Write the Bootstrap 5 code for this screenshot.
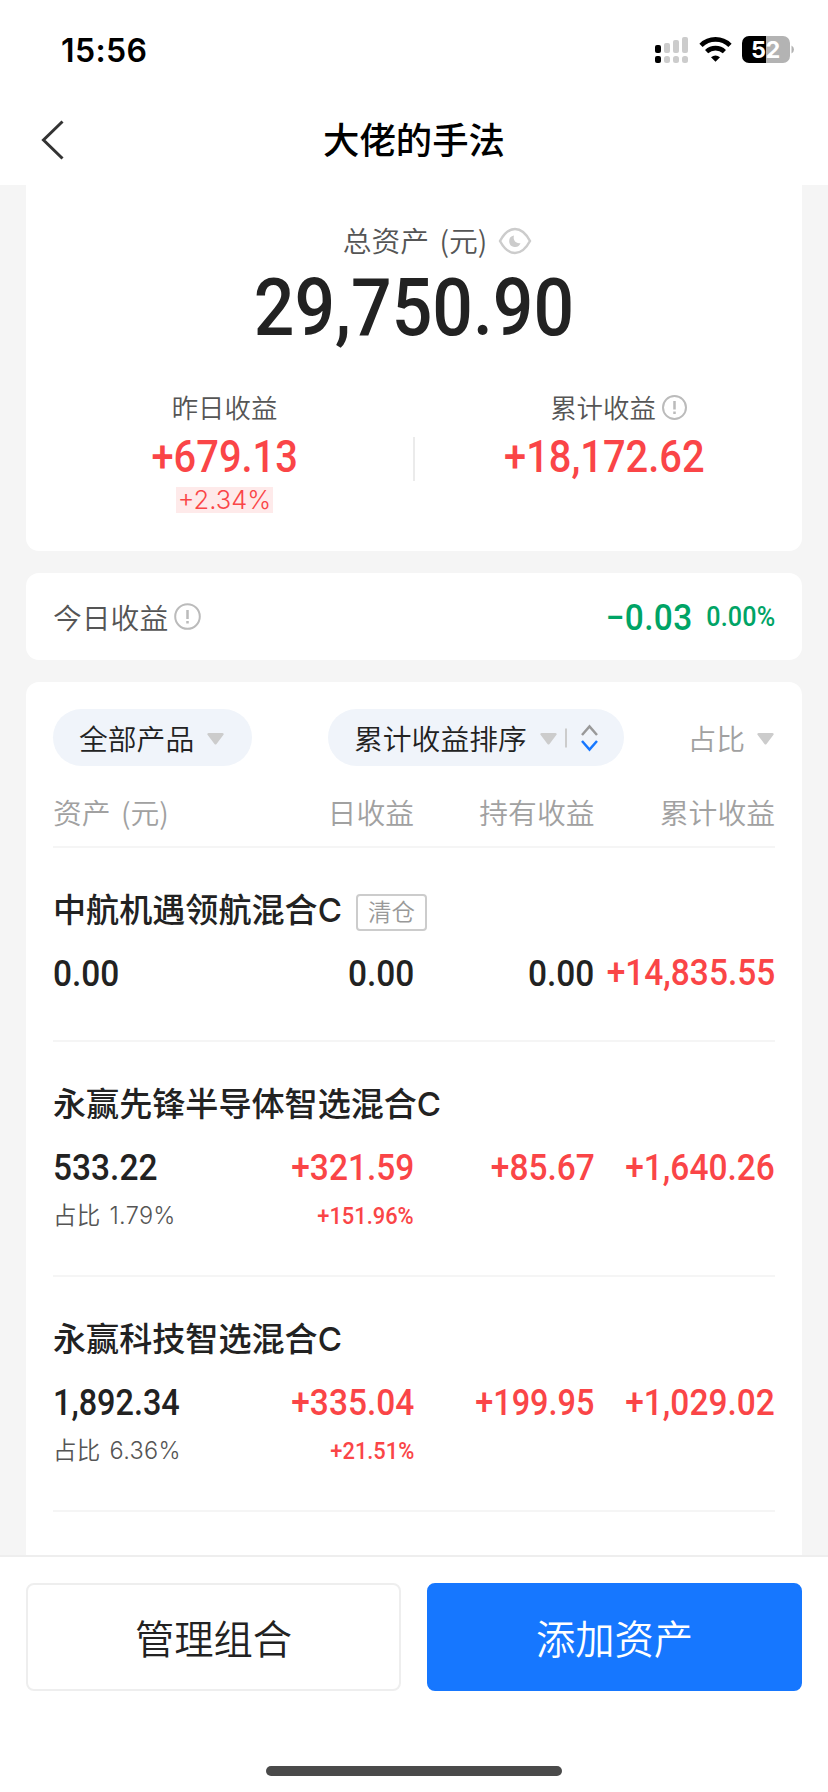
<!DOCTYPE html>
<html lang="zh-CN">
<head>
<meta charset="utf-8">
<meta name="viewport" content="width=device-width, initial-scale=1">
<title>大佬的手法</title>
<link href="https://cdn.jsdelivr.net/npm/bootstrap@5.3.0/dist/css/bootstrap.min.css" rel="stylesheet">
<style>
  body { height: 1792px; overflow: hidden; background: #f5f5f5; color: #222; font-family: Inter, "Noto Sans CJK SC", sans-serif; }
  svg { display: block; flex: none; }
  .status { height: 100px; padding: 0 34px 0 61px; }
  .clock { font-size: 32px; font-weight: 600; line-height: 40px; color: #000; letter-spacing: .4px; padding-top: 1px; }
  .titlebar { height: 85px; display: grid; grid-template-columns: 100px 1fr 100px; }
  .titlebar h1 { font-size: 36.4px; font-weight: 500; line-height: 83px; color: #000; }
  .scroll { height: 1370px; padding: 0 26px; }
  .panel { background: #fff; border-radius: 13px; }
  .panel-total { height: 366px; border-radius: 0 0 13px 13px; padding-top: 35px; margin-bottom: 22px; }
  .panel-today { height: 87px; padding: 0 27px; margin-bottom: 22px; }
  .panel-list { height: 873px; border-radius: 13px 13px 0 0; padding: 27px 27px 0; }
  .din { display: inline-block; font-family: Roboto, sans-serif; font-weight: 500; transform: scaleX(.93); white-space: nowrap; }
  .din.tight { transform: scaleX(.9); }
  .start { transform-origin: left; } .end { transform-origin: right; }
  .cn { font-family: "Noto Sans CJK SC DemiLight", "Noto Sans CJK SC", sans-serif; }
  .t29 { font-size: 28.8px; line-height: 40px; }
  .t26 { font-size: 26.4px; line-height: 36px; }
  .paren { word-spacing: 4px; }
  .dim { color: #555; } .pale { color: #a1a1a1; }
  .up { color: #fa4547; } .down { color: #00a466; }
  .total { font-size: 79px; line-height: 92px; }
  .total .din { transform: scaleX(.905); }
  .gain { font-size: 45px; line-height: 50px; margin-top: 6px; }
  .gain .din { transform: scaleX(.885); }
  .chip { background: #feeaea; font-size: 25.5px; font-weight: 350; line-height: 26px; height: 26px; width: 97px; margin-top: 5px; }
  .split { width: 2px; height: 44px; background: #ebebeb; margin-top: 48px; }
  .gains { padding-top: 35px; }
  .gain-day { width: 387px; padding-left: 10px; }
  .gain-all { width: 387px; }
  .gain-all .gain { padding-right: 9px; }
  .gain-all .t26 { padding-left: 21px; }
  .pill { height: 57px; border-radius: 29px; background: #f0f4fa; }
  .heads { height: 82px; padding-top: 26px; border-bottom: 2px solid #f5f5f5; }
  .fund { height: 235px; padding-top: 39px; border-bottom: 2px solid #f5f5f5; }
  .fund.short { height: 194px; }
  .fund h2 { font-size: 33.1px; font-weight: 500; line-height: 46px; margin: 0; }
  .tag { border: 2px solid #ccc; border-radius: 4px; width: 71px; height: 37px; font-size: 23.5px; line-height: 31px; color: #999; margin: 4px 0 0 14px; }
  .amount { font-size: 36px; line-height: 40px; margin-top: 20px; }
  .sub { font-size: 23.5px; line-height: 32px; margin-top: 12px; }
  .share { font-family: Inter, "Noto Sans CJK SC DemiLight", "Noto Sans CJK SC", sans-serif; font-weight: 350; word-spacing: 2px; letter-spacing: .3px; }
  .footer-bar { height: 237px; border-top: 2px solid #eee; background: #fff; padding: 26px 26px 0; }
  .footer-bar .btn { height: 108px; border-radius: 8px; font-size: 39.3px; border-width: 2px; padding: 0; }
  .btn-manage { border-color: #eee; color: #222; background: #fff; }
  .btn-add { background: #1677ff; border-color: #1677ff; color: #fff; }
  .homebar { width: 296px; height: 10px; border-radius: 5px; background: #4a4a4a; margin: 75px auto 0; }
</style>
</head>
<body>
<header class="bg-white">
  <div class="status d-flex align-items-center justify-content-between">
    <span class="clock">15:56</span>
    <svg width="140" height="30" viewBox="0 0 140 30">
      <g fill="#000"><rect x="1" y="10" width="6" height="8" rx="2"/><rect x="1" y="21" width="6" height="7" rx="2"/></g>
      <g fill="#ccc"><rect x="10" y="8" width="6" height="10" rx="2"/><rect x="19" y="5" width="6" height="13" rx="2"/><rect x="28" y="2" width="6" height="16" rx="2"/><rect x="10" y="21" width="6" height="7" rx="2.5"/><rect x="19" y="21" width="6" height="7" rx="2.5"/><rect x="28" y="21" width="6" height="7" rx="2.5"/></g>
      <g fill="none" stroke="#000" stroke-width="4.6"><path d="M47 10.3a20.700 20.700 0 0 1 29 0M52.600 16.600a13 13 0 0 1 17.800 0"/></g>
      <path d="M57 22.300Q61.500 18.700 66 22.300L61.500 26.700Z"/>
      <path d="M95 1h17v27H95a7 7 0 0 1-7-7V8a7 7 0 0 1 7-7Z"/>
      <path fill="#b3b3b3" d="M112 1h17a7 7 0 0 1 7 7v13a7 7 0 0 1-7 7h-17ZM137.500 10.500q2.500 1.500 2.500 4t-2.500 4Z"/>
      <text x="111.500" y="23" text-anchor="middle" fill="#fff" font-family="Inter, sans-serif" font-size="23.500" font-weight="700" letter-spacing="-.5">52</text>
    </svg>
  </div>
  <nav class="titlebar">
    <svg class="mt-2" width="100" height="60" viewBox="0 0 100 60" fill="none" stroke="#333" stroke-width="3"><path d="M62.500 13.500 43.500 32l19 18.500"/></svg>
    <h1 class="text-center m-0">大佬的手法</h1>
  </nav>
</header>

<main class="scroll">
  <section class="panel panel-total">
    <div class="d-flex justify-content-center align-items-center cn t29 dim paren" style="padding-left:47px">
      <span>总资产 (元)</span>
      <svg style="margin:2px 0 0 11px" width="34" height="28" viewBox="0 0 34 28"><path d="M2 14C6 6.500 11 2 17 2s11 4.500 15 12C28 21.500 23 26 17 26S6 21.500 2 14Z" fill="none" stroke="#ccc" stroke-width="2.500"/><path d="M16 8.500a5.800 5.800 0 1 0 6.500 7.500c-4 1-8-2.500-6.500-7.500Z" fill="#ccc"/></svg>
    </div>
    <div class="text-center total"><span class="din">29,750.90</span></div>
    <div class="gains d-flex text-center">
      <div class="gain-day">
        <div class="cn t26 dim">昨日收益</div>
        <div class="gain up"><span class="din">+679.13</span></div>
        <div class="chip up mx-auto">+2.34%</div>
      </div>
      <div class="split"></div>
      <div class="gain-all">
        <div class="cn t26 dim d-flex justify-content-center align-items-center">累计收益
          <svg style="margin-left:5px" width="27" height="27" viewBox="0 0 27 27"><circle cx="13.500" cy="13.500" r="11.500" fill="none" stroke="#bbb" stroke-width="2"/><path d="M13.500 7v8.500M13.500 17.500v2.500" stroke="#bbb" stroke-width="2.500"/></svg>
        </div>
        <div class="gain up"><span class="din">+18,172.62</span></div>
      </div>
    </div>
  </section>

  <section class="panel panel-today d-flex align-items-center justify-content-between">
    <div class="cn t29 dim d-flex align-items-center">今日收益
      <svg class="ms-1" width="30" height="28" viewBox="0 0 30 28"><circle cx="15.500" cy="13.500" r="12.300" fill="none" stroke="#bbb" stroke-width="2"/><path d="M15.500 7v9M15.500 18v2.500" stroke="#bbb" stroke-width="2.500"/></svg>
    </div>
    <div class="d-flex align-items-center down pt-1">
      <span class="din end" style="font-size:36px; margin-top:-2px; letter-spacing:.4px">−0.03</span>
      <span class="din end" style="font-size:27px; margin:-2px 0 0 8px; letter-spacing:.2px">0.00%</span>
    </div>
  </section>

  <section class="panel panel-list">
    <div class="d-flex align-items-center cn t29">
      <div class="pill d-flex align-items-center" style="width:199px; padding-left:26px">全部产品
        <svg style="margin:3px 0 0 13px" width="17" height="12" viewBox="0 0 17 12"><path fill="#ccc" d="M1.500 0h14q2 .5.800 2L9.500 11q-1 1-2 0L.7 2Q-.5.500 1.500 0Z"/></svg>
      </div>
      <div class="pill d-flex align-items-center" style="width:296px; margin-left:76px; padding-left:26px">累计收益排序
        <svg style="margin:3px 0 0 13px" width="17" height="12" viewBox="0 0 17 12"><path fill="#ccc" d="M1.500 0h14q2 .5.800 2L9.500 11q-1 1-2 0L.7 2Q-.5.500 1.500 0Z"/></svg>
        <svg style="margin-left:8px" width="34" height="30" viewBox="0 0 34 30" fill="none" stroke-width="2.500"><path stroke="#ccc" stroke-width="2" d="M1 5.500v19"/><path stroke="#999" d="m17 12 7.500-8.500L32 12"/><path stroke="#1677ff" d="m17 18 7.500 8.500L32 18"/></svg>
      </div>
      <div class="pale d-flex align-items-center ms-auto">占比
        <svg style="margin:3px 1px 0 12px" width="17" height="12" viewBox="0 0 17 12"><path fill="#ccc" d="M1.500 0h14q2 .5.800 2L9.500 11q-1 1-2 0L.7 2Q-.5.500 1.500 0Z"/></svg>
      </div>
    </div>
    <div class="heads row g-0 cn t29 pale text-end">
      <div class="col-3 text-start paren">资产 (元)</div><div class="col-3">日收益</div><div class="col-3">持有收益</div><div class="col-3">累计收益</div>
    </div>

    <article class="fund short">
      <div class="d-flex align-items-center" style="height:46px"><h2>中航机遇领航混合C</h2><span class="tag cn text-center">清仓</span></div>
      <div class="row g-0 amount text-end">
        <div class="col-3 text-start"><span class="din start">0.00</span></div><div class="col-3"><span class="din end">0.00</span></div><div class="col-3"><span class="din end">0.00</span></div><div class="col-3 up d-flex justify-content-end"><span class="din end">+14,835.55</span></div>
      </div>
    </article>

    <article class="fund">
      <h2>永赢先锋半导体智选混合C</h2>
      <div class="row g-0 amount text-end">
        <div class="col-3 text-start"><span class="din start">533.22</span></div><div class="col-3 up"><span class="din end">+321.59</span></div><div class="col-3 up"><span class="din end">+85.67</span></div><div class="col-3 up"><span class="din end">+1,640.26</span></div>
      </div>
      <div class="row g-0 sub">
        <div class="col-3 dim share">占比 1.79%</div><div class="col-3 text-end up"><span class="din end">+151.96%</span></div>
      </div>
    </article>

    <article class="fund">
      <h2>永赢科技智选混合C</h2>
      <div class="row g-0 amount text-end">
        <div class="col-3 text-start"><span class="din start tight">1,892.34</span></div><div class="col-3 up"><span class="din end">+335.04</span></div><div class="col-3 up"><span class="din end tight">+199.95</span></div><div class="col-3 up"><span class="din end">+1,029.02</span></div>
      </div>
      <div class="row g-0 sub">
        <div class="col-3 dim share">占比 6.36%</div><div class="col-3 text-end up"><span class="din end">+21.51%</span></div>
      </div>
    </article>
  </section>
</main>

<footer class="footer-bar">
  <div class="d-flex" style="gap:26px">
    <button class="btn btn-manage cn flex-fill w-50">管理组合</button>
    <button class="btn btn-add cn flex-fill w-50">添加资产</button>
  </div>
  <div class="homebar"></div>
</footer>
<script src="https://cdn.jsdelivr.net/npm/bootstrap@5.3.0/dist/js/bootstrap.bundle.min.js"></script>
</body>
</html>
